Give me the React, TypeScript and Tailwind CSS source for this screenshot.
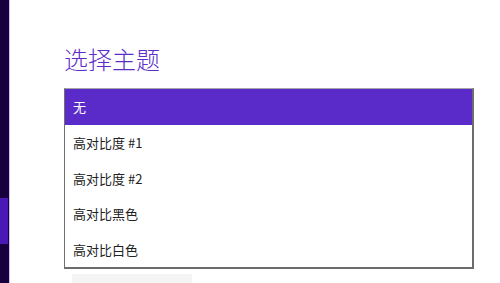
const themes = ['无', '高对比度 #1', '高对比度 #2', '高对比黑色', '高对比白色'];

export default function App() {
  return (
    <div
      className="flex w-[500px] h-[283px] overflow-hidden bg-white"
      style={{ fontFamily: '"Noto Sans CJK SC", "Noto Sans", sans-serif' }}
    >
      <div className="w-[9px] shrink-0 bg-[#17003d] pt-[198px]">
        <div className="w-[8px] h-[46px] bg-[#4a18b6]" />
      </div>
      <div className="w-px shrink-0 bg-[#cfc3ee]" />
      <div className="flex-1 pl-[54px]">
        <h1 className="mt-[44px] text-[24px] leading-[30px] font-light text-[#5b2dc8]">选择主题</h1>
        <ul className="mt-[14px] w-[410px] border-t border-t-[#a5a5a5] border-l border-l-[#707070] border-r-2 border-r-[#6c6c6c] border-b-2 border-b-[#6c6c6c] bg-white">
          {themes.map((t, i) => (
            <li
              key={t}
              className={
                i === 0
                  ? 'h-[36px] flex items-center pl-[8px] text-[13px] bg-[#5a2bc9] text-white'
                  : 'h-[35.5px] flex items-center pl-[8px] text-[13px] text-[#222222]'
              }
            >
              {t}
            </li>
          ))}
        </ul>
        <div className="mt-[5px] ml-[8px] w-[120px] h-[20px] bg-[#f4f4f4]" />
      </div>
    </div>
  );
}
